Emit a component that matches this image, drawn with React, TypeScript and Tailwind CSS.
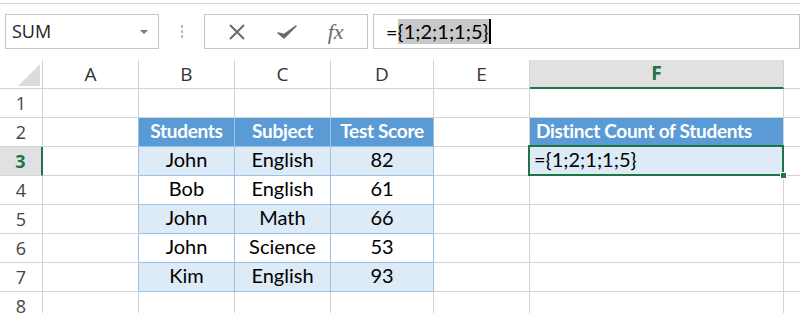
import React from 'react'

const cols = ['A', 'B', 'C', 'D', 'E', 'F']

const rows = [
  ['John', 'English', '82'],
  ['Bob', 'English', '61'],
  ['John', 'Math', '66'],
  ['John', 'Science', '53'],
  ['Kim', 'English', '93'],
]

const gray = 'border-[#d4d4d4]'
const cellFont = "font-['Lato',sans-serif] text-[20px] text-black"
const headFont = "font-['Lato',sans-serif] text-[19px] tracking-[-0.3px] font-bold text-white"

function RowHead({ n, active }: { n: number; active?: boolean }) {
  return (
    <div
      className={
        'flex items-center justify-center border-b font-["Open_Sans",sans-serif] text-[18px] ' +
        gray +
        (active
          ? ' bg-[#e1e1e1] border-r-2 border-r-[#217346] font-bold text-[#217346]'
          : ' border-r text-[#444]')
      }
    >
      {n}
    </div>
  )
}

function Empty({ blueRight }: { blueRight?: boolean }) {
  return <div className={'border-b border-r ' + gray + (blueRight ? ' border-r-[#9bc2e6]' : '')} />
}

export default function App() {
  return (
    <div className="w-[800px] h-[313px] overflow-hidden bg-white">
      {/* ribbon edge */}
      <div className="h-[14px] pt-[3px]">
        <div className="border-t border-[#d4d4d4]" />
      </div>

      {/* formula bar */}
      <div className="flex h-[35px] items-stretch">
        <div className="ml-[5px] w-[154px] border border-[#c6c6c6] flex items-center justify-between pl-[6px] pr-[10px]">
          <span className="font-['Open_Sans',sans-serif] text-[18px] text-[#222]">SUM</span>
          <span className="w-0 h-0 border-l-[4px] border-r-[4px] border-t-[4px] border-l-transparent border-r-transparent border-t-[#777]" />
        </div>
        <div className="w-[45px] flex flex-col items-center justify-center gap-[2px]">
          <span className="w-[2px] h-[3px] bg-[#b8b8b8]" />
          <span className="w-[2px] h-[3px] bg-[#b8b8b8]" />
          <span className="w-[2px] h-[3px] bg-[#b8b8b8]" />
        </div>
        <div className="w-[164px] border border-[#c6c6c6] flex items-center justify-around px-[8px]">
          <svg width="18" height="18" viewBox="0 0 18 18" className="text-[#6a6a6a]">
            <path d="M2 2L16 16M16 2L2 16" stroke="currentColor" strokeWidth="2" fill="none" />
          </svg>
          <svg width="20" height="16" viewBox="0 0 20 16" className="text-[#6a6a6a]">
            <path d="M1 9L7 14L19 2L7 10.5Z" fill="currentColor" stroke="currentColor" strokeWidth="1.5" strokeLinejoin="round" />
          </svg>
          <span className="font-['Liberation_Serif',serif] italic text-[22px] text-[#6a6a6a] leading-none">fx</span>
        </div>
        <div className="ml-[5px] flex-1 border border-[#c6c6c6] flex items-center pl-[12px]">
          <span className={cellFont}>=</span>
          <span className={cellFont + ' bg-[#c8c8c8] leading-[25px]'}>{'{1;2;1;1;5}'}</span>
          <span className="w-[2px] h-[25px] bg-black" />
        </div>
      </div>

      {/* sheet */}
      <div className="mt-[11px] grid grid-cols-[43px_96px_96px_96px_103px_96px_254px_1fr] grid-rows-[29px_repeat(8,29px)]">
        {/* column headers */}
        <div className={'relative border-b border-r ' + gray}>
          <svg width="22" height="22" viewBox="0 0 22 22" className="absolute right-[2px] bottom-[2px]">
            <polygon points="22,0 22,22 0,22" fill="#dcdcdc" />
          </svg>
        </div>
        {cols.map((c) =>
          c === 'F' ? (
            <div
              key={c}
              className="flex items-center justify-center bg-[#e1e1e1] border-b-2 border-b-[#217346] border-r border-r-[#d4d4d4] font-['Open_Sans',sans-serif] text-[19px] font-bold text-[#217346]"
            >
              {c}
            </div>
          ) : (
            <div
              key={c}
              className={'flex items-center justify-center border-b border-r font-["Open_Sans",sans-serif] text-[19px] text-[#333] ' + gray}
            >
              {c}
            </div>
          )
        )}
        <div className={'border-b ' + gray} />

        {/* row 1 */}
        <RowHead n={1} />
        {cols.map((c) => (
          <Empty key={c} />
        ))}
        <div className={'border-b ' + gray} />

        {/* row 2: headers */}
        <RowHead n={2} />
        <Empty blueRight />
        {['Students', 'Subject', 'Test Score'].map((h) => (
          <div
            key={h}
            className={'flex items-end justify-center pb-[1px] bg-[#5b9bd5] border-b border-r border-[#9bc2e6] ' + headFont}
          >
            {h}
          </div>
        ))}
        <Empty />
        <div className={'flex items-end pb-[1px] pl-[6px] bg-[#5b9bd5] border-b border-r border-b-[#d4d4d4] border-r-[#d4d4d4] whitespace-nowrap ' + headFont}>
          Distinct Count of Students
        </div>
        <div className={'border-b ' + gray} />

        {/* data rows */}
        {rows.map((r, i) => (
          <React.Fragment key={i}>
            <RowHead n={i + 3} active={i === 0} />
            <Empty blueRight />
            {r.map((v, j) => (
              <div
                key={j}
                className={
                  'flex items-end justify-center pb-[1px] border-b border-r border-[#9bc2e6] ' +
                  cellFont +
                  (i % 2 === 0 ? ' bg-[#ddebf7]' : ' bg-white')
                }
              >
                {v}
              </div>
            ))}
            <Empty />
            {i === 0 ? (
              <div className={'relative flex items-end pb-[1px] pl-[4px] bg-[#ddebf7] border-b border-r ' + gray + ' ' + cellFont}>
                ={'{1;2;1;1;5}'}
                <div className="absolute -left-[2px] -top-[2px] -right-[1px] -bottom-px border-2 border-[#217346] pointer-events-none" />
                <div className="absolute -right-[4px] -bottom-[4px] w-[7px] h-[7px] bg-[#217346] border border-white" />
              </div>
            ) : (
              <Empty />
            )}
            <div className={'border-b ' + gray} />
          </React.Fragment>
        ))}

        {/* row 8 */}
        <RowHead n={8} />
        {cols.map((c) => (
          <Empty key={c} />
        ))}
        <div className={'border-b ' + gray} />
      </div>
    </div>
  )
}
